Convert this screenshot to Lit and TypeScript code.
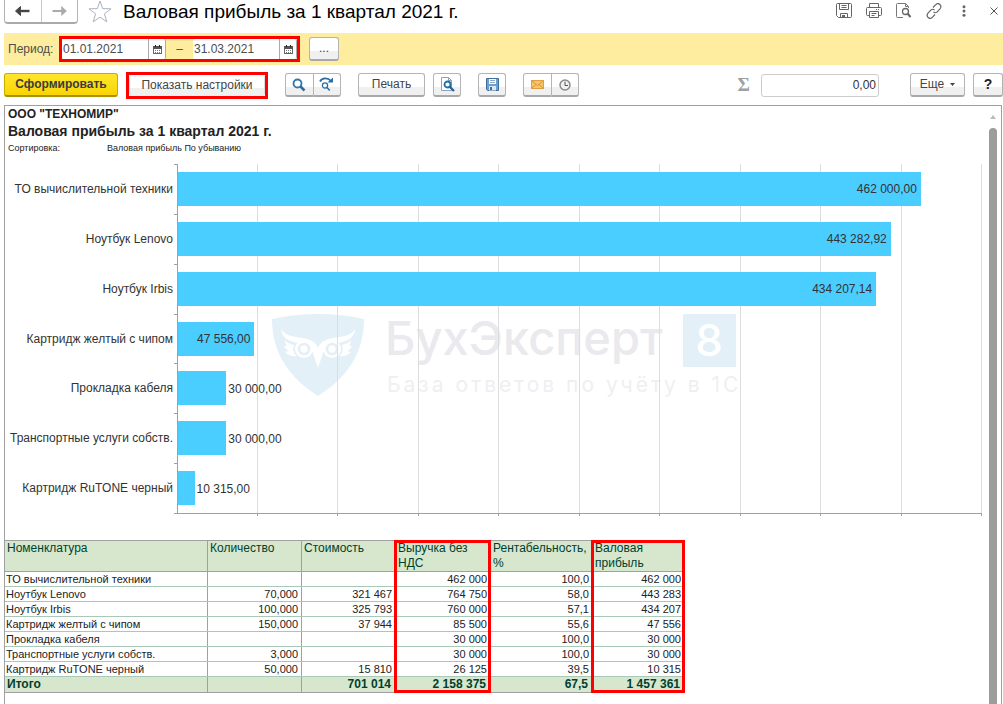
import { LitElement, html, css, svg } from "lit";
import { customElement } from "lit/decorators.js";

const BARS = [
  { name: "ТО вычислительной техники", value: 462000, text: "462 000,00" },
  { name: "Ноутбук Lenovo", value: 443282.92, text: "443 282,92" },
  { name: "Ноутбук Irbis", value: 434207.14, text: "434 207,14" },
  { name: "Картридж желтый с чипом", value: 47556, text: "47 556,00" },
  { name: "Прокладка кабеля", value: 30000, text: "30 000,00" },
  { name: "Транспортные услуги собств.", value: 30000, text: "30 000,00" },
  { name: "Картридж RuTONE черный", value: 10315, text: "10 315,00" },
];
const AXIS_MAX = 500000;
const INSIDE_FROM = 40000;

const COLUMNS = ["Номенклатура", "Количество", "Стоимость", "Выручка без НДС", "Рентабельность, %", "Валовая прибыль"];
const MARKED = [3, 5];
const ROWS = [
  ["ТО вычислительной техники", "", "", "462 000", "100,0", "462 000"],
  ["Ноутбук Lenovo", "70,000", "321 467", "764 750", "58,0", "443 283"],
  ["Ноутбук Irbis", "100,000", "325 793", "760 000", "57,1", "434 207"],
  ["Картридж желтый с чипом", "150,000", "37 944", "85 500", "55,6", "47 556"],
  ["Прокладка кабеля", "", "", "30 000", "100,0", "30 000"],
  ["Транспортные услуги собств.", "3,000", "", "30 000", "100,0", "30 000"],
  ["Картридж RuTONE черный", "50,000", "15 810", "26 125", "39,5", "10 315"],
];
const TOTAL = ["Итого", "", "701 014", "2 158 375", "67,5", "1 457 361"];

const icon = (w: number, h: number, body: unknown) =>
  html`<svg width=${w} height=${h} viewBox="0 0 ${w} ${h}" fill="none" aria-hidden="true">${body}</svg>`;

const calendar = icon(9, 9, svg`
  <rect x="0.5" y="1.5" width="8" height="7" fill="#fff" stroke="#666"/>
  <path d="M0 1h9v3H0z" fill="#555"/><path d="M2 0h1v2H2zM6 0h1v2H6z" fill="#222"/>
  <path d="M2 5.500h5M2 7.500h5" stroke="#777" stroke-dasharray="1 1"/>`);
const back = icon(15, 10, svg`<path d="M14.500 5H3" stroke="#444" stroke-width="2.400"/><path d="M.5 5L5.500.5v3L4.500 5l1 1.500v3z" fill="#444" stroke="#444"/>`);
const forward = icon(15, 10, svg`<path d="M.5 5H12" stroke="#aaa" stroke-width="2"/><path d="M14.500 5L9.500.5v3L10.500 5l-1 1.500v3z" fill="#aaa" stroke="#aaa" stroke-width=".6"/>`);
const star = icon(24, 23, svg`<path d="M12 1l2.700 7.600 8.300.2-6.600 5 2.400 8L12 17.200 5.200 21.800l2.400-8L1 8.800l8.300-.2z" stroke="#a9b2bd" stroke-width="1"/>`);
const search = icon(14, 14, svg`<circle cx="5.500" cy="5.500" r="4" stroke="#2c78ad" stroke-width="1.800"/><path d="M8.500 8.500l4 4" stroke="#2c6da4" stroke-width="2.500"/>`);
const searchNext = icon(15, 15, svg`<path d="M1 4.500C3 .5 9 .5 12 4" stroke="#2c6da4" stroke-width="1.800"/><path d="M14 .500v5H8.500z" fill="#2c6da4"/>
  <circle cx="6" cy="8.500" r="2.600" stroke="#2c6da4" stroke-width="1.300"/><path d="M8 10.500l2.800 3" stroke="#2c6da4" stroke-width="1.600"/>`);
const preview = icon(15, 15, svg`<path d="M1.500.5h7l3 3v10h-10z" fill="#fff" stroke="#8da2b5"/><path d="M8.500.5v3h3" stroke="#8da2b5"/>
  <circle cx="7.500" cy="7.500" r="3" stroke="#1f6fa5" stroke-width="1.800"/><path d="M9.500 9.500l4.500 4.500" stroke="#1f6599" stroke-width="2.200"/>`);
const save = icon(13, 13, svg`<path d="M.5.5h12v12h-11l-1-1z" fill="#6d9fd0" stroke="#3f6e9e"/><path d="M3 1h7v5H3z" fill="#fff"/>
  <path d="M4 2.500h5M4 4.500h5" stroke="#8fa9c0"/><path d="M3 8h7v4.500H3z" fill="#dfe7ee"/><path d="M4 9h2v3H4z" fill="#3f6e9e"/>`);
const mail = icon(13, 9, svg`<path d="M.5.5h12v8H.5z" fill="#f7c46c" stroke="#e0a040"/><path d="M.5.5l6 5 6-5M.5 8.500l4.500-4M12.500 8.500L8 4.500" stroke="#cf8b28" stroke-width=".8"/>`);
const clock = icon(12, 12, svg`<circle cx="6" cy="6" r="5" fill="#f2f2f2" stroke="#8a8a8a" stroke-width="1.500"/><path d="M6 2.500V6.500h3" stroke="#555"/>`);
const diskLine = icon(16, 16, svg`<path d="M.5 1.500q0-1 1-1h13q1 0 1 1v12q0 1-1 1h-12l-2-2z" stroke="#666"/><path d="M3.500.5v6h9v-6M5.500 2.500h5M5.500 4.500h5" stroke="#666"/><path d="M4.500 14.500v-4h7v4" stroke="#666"/><path d="M6 12h3v2H6z" fill="#666"/>`);
const printer = icon(16, 16, svg`<path d="M3.500 4V.5h9V4M3.500 12.500h-2q-1 0-1-1v-6q0-1 1-1h13q1 0 1 1v6q0 1-1 1h-2" stroke="#666"/><path d="M3.500 8.500h9v6h-9zM5.500 10.500h5M5.500 12.500h3M10 6.500h1M12 6.500h1" stroke="#666"/>`);
const pageSearch = icon(16, 16, svg`<path d="M7 14.500H1.500q-1 0-1-1v-12q0-1 1-1h8l3 3V5" stroke="#777"/><path d="M9.500.5v3h3" stroke="#777"/><circle cx="9.500" cy="8.500" r="3" stroke="#666" stroke-width="1.300"/><path d="M11.500 10.500l3 3.500" stroke="#666" stroke-width="2"/>`);
const link = icon(16, 16, svg`<g stroke="#666" stroke-width="1.200"><path d="M7 4.500l2.500-2.700c3-3 7 .8 4.500 4l-2.800 3c-1 1-2.500 1.200-3.800.3"/><path d="M9 11.500l-2.500 2.700c-3 3-7-.8-4.500-4l2.800-3c1-1 2.500-1.200 3.800-.3"/></g>`);
const dots = icon(4, 12, svg`<g fill="#666"><circle cx="2" cy="1.700" r="1.500"/><circle cx="2" cy="6" r="1.500"/><circle cx="2" cy="10.300" r="1.500"/></g>`);
const cross = icon(8, 8, svg`<path d="M.5.5l7 7M7.500.5l-7 7" stroke="#555"/>`);

const watermark = html`<svg class="watermark" width="490" height="120" viewBox="0 -20 490 120" aria-hidden="true">
  <path d="M0 5Q46-5 92 5C92 38 76 63 46 82C16 63 0 38 0 5z" fill="#e3f0f8"/>
  <g fill="#fff">
    <path d="M9 15C14 24 28 22 38 26C43 28 45 31 46 34C47 31 49 28 54 26C64 22 78 24 83 15C82 24 76 27 66 29C58 30 52 33 50 42L46 54L42 42C40 33 34 30 26 29C16 27 10 24 9 15z"/>
    <circle cx="32" cy="35" r="9"/><circle cx="60" cy="35" r="9"/>
    <path d="M13 26q3 4 9 5l-1 5q1 4 4 6q-8 1-12-4l4-1q-4-2-5-5l3 0q-2-3-2-6zM79 26q-3 4-9 5l1 5q-1 4-4 6q8 1 12-4l-4-1q4-2 5-5l-3 0q2-3 2-6z"/>
  </g>
  <g stroke="#e3f0f8" fill="none" stroke-width="2.600"><circle cx="32" cy="35" r="5"/><circle cx="60" cy="35" r="5"/></g>
  <text class="brand" x="113" y="41">БухЭксперт</text>
  <text class="slogan" x="115" y="78">База ответов по учёту в 1С</text>
  <path d="M411 0h53v53h-53z" fill="#e3f0f8"/>
  <text class="eight" x="437" y="42" text-anchor="middle">8</text>
</svg>`;

@customElement("app-root")
export class AppRoot extends LitElement {
  static styles = css`
    :host { display: block; height: 100vh; overflow: hidden; background: #fff; color: #333; font: 12px/15px "Liberation Sans", Arial, sans-serif; }
    * { box-sizing: border-box; }
    svg { display: block; flex: none; }
    button, input { font: inherit; color: inherit; margin: 0; padding: 0; }
    .page { display: flex; flex-direction: column; height: 100%; padding-left: 4px; }
    header { display: flex; height: 33px; flex: none; align-items: flex-start; }
    .nav { display: flex; width: 74px; height: 24px; border: 1px solid #b4b4b4; border-top: 0; border-bottom: 2px solid #aaa; border-radius: 0 0 4px 4px; }
    .plain { border: 0; background: none; display: flex; align-items: center; justify-content: center; }
    .nav .plain { flex: 1; }
    .nav .plain + .plain { border-left: 1px solid #c8c8c8; }
    .star { margin: 0 11px 0 10px; }
    h1 { margin: 0; flex: 1; font-size: 19px; line-height: 24px; font-weight: 400; color: #000; white-space: nowrap; }
    .tools { display: flex; align-items: center; gap: 14px; height: 22px; padding-right: 5px; }
    .tools .dots { margin-left: 6px; }
    .tools .cross { margin-left: 10px; }
    .period { display: flex; flex: none; align-items: center; height: 32px; background: #ffed9f; padding-left: 4px; color: #4d4d4d; }
    .period label.title { width: 51px; white-space: nowrap; }
    .mark { border: 3px solid #f00; display: flex; align-items: center; }
    .dates { height: 26px; }
    .date { display: flex; height: 20px; width: 104px; background: #fff; border-right: 1px solid #aaa; border-radius: 2px; }
    .date input { flex: 1; min-width: 0; border: 0; background: none; outline: 0; padding-left: 1px; }
    .date .plain { width: 17px; border-left: 1px solid #aaa; }
    .dash { width: 27px; text-align: center; }
    .btn { display: flex; align-items: center; justify-content: center; height: 24px; border: 1px solid #b4b4b4; border-bottom: 2px solid #a8a8a8; border-radius: 3px; background: linear-gradient(#fff 60%, #f0f0f0 61%); color: #444; white-space: nowrap; }
    .more { width: 30px; margin-left: 9px; }
    .bar { display: flex; flex: none; align-items: center; height: 40px; }
    .primary { width: 114px; font-weight: 700; background: linear-gradient(#ffe52e, #f9d500); border-color: #c9ac00; border-bottom-color: #a89000; color: #3b3b3b; }
    .settings { margin-left: 8px; height: 27px; width: 142px; }
    .settings .btn { height: 21px; flex: 1; border-color: #ddd; border-width: 0 1px; }
    .pair { display: flex; width: 56px; margin-left: 17px; }
    .pair .btn { flex: 1; }
    .pair .btn:first-child { border-radius: 3px 0 0 3px; }
    .pair .btn:last-child { border-radius: 0 3px 3px 0; border-left: 0; }
    .print { width: 67px; margin-left: 17px; }
    .single { width: 28px; }
    .near { margin-left: 8px; }
    .far { margin-left: 17px; }
    .sum { display: flex; align-items: center; margin-left: auto; gap: 11px; }
    .sigma { font: 700 19px/24px "Liberation Serif", serif; color: #a0a0a0; }
    .sum input { width: 118px; height: 23px; border: 1px solid #ccc; border-radius: 3px; text-align: right; padding-right: 2px; background: #fff; }
    .menu { width: 55px; margin-left: 31px; gap: 6px; }
    .help { width: 30px; margin-left: 8px; font-weight: 700; font-size: 14px; color: #222; }
    .report { display: flex; flex: 1; min-height: 0; border: 1px solid #a0a0a0; border-bottom: 0; margin-right: 1px; overflow: hidden; }
    .sheet { flex: 1; min-width: 0; overflow: hidden; }
    .rail { width: 12px; display: flex; flex-direction: column; align-items: center; padding-right: 4px; }
    .rail .arrow { margin: 9px 0 9px; }
    .thumb { width: 8px; flex: 1; background: #9c9c9c; border-radius: 4px 4px 0 0; }
    .org { margin: 0; padding: 1px 3px 0; line-height: 15px; font-weight: 700; color: #222; }
    h2 { margin: 0; padding: 0 3px; font-size: 14px; line-height: 19px; font-weight: 700; color: #222; }
    .sort { display: flex; padding-left: 3px; font-size: 9px; line-height: 15px; color: #222; }
    .sort dt { width: 99px; }
    .sort dd, .sort { margin: 0; }
    .chart { position: relative; display: flex; margin-top: 8px; height: 350px; padding-right: 7px; }
    .names { width: 172px; display: flex; flex-direction: column; padding-bottom: 1px; }
    .names div { flex: 1; display: flex; align-items: center; justify-content: flex-end; padding: 1px 4px 0 0; white-space: nowrap; position: relative; }
    .names div::after, .names div:last-child::before { content: ""; position: absolute; right: 0; top: 0; width: 3px; height: 1px; background: #a0a0a0; }
    .names div:last-child::before { top: 100%; }
    .plot { position: relative; flex: 1; display: flex; flex-direction: column; border-left: 1px solid #a0a0a0; border-bottom: 1px solid #a0a0a0; }
    .grid { position: absolute; inset: 0 0 -3px -1px; display: flex; }
    .grid i { flex: 1; border-right: 1px solid #ddd; position: relative; }
    .grid i::after { content: ""; position: absolute; right: -1px; bottom: 0; width: 1px; height: 3px; background: #a0a0a0; }
    .row { position: relative; flex: 1; display: flex; align-items: center; }
    .fill { height: 34px; background: #4acdff; display: flex; align-items: center; justify-content: flex-end; padding: 2px 4px 0 0; white-space: nowrap; }
    .fill.short { padding: 0; }
    .value { padding: 2px 0 0 2px; }
    .watermark { position: absolute; left: 267px; top: 130px; overflow: visible; }
    .brand { font: 500 47px Inter, "Open Sans", sans-serif; fill: #e9e9ee; }
    .slogan { font: 400 21px Inter, "Open Sans", sans-serif; fill: #efeff3; letter-spacing: 3px; }
    .eight { font: 500 44px Inter, "Open Sans", sans-serif; fill: #fff; }
    table { border-collapse: collapse; table-layout: fixed; width: 680px; margin-top: 26px; font-size: 11px; line-height: 14px; margin-left: -1px; }
    .c0 { width: 203px; } .c1, .c2 { width: 94px; } .c3 { width: 95px; } .c4 { width: 102px; } .c5 { width: 92px; }
    th, td { position: relative; padding: 0 3px 0 2px; border: 1px solid #a9c8b8; text-align: right; font-weight: 400; white-space: nowrap; color: #222; border-left-color: #a0a0a0; border-right-color: #a0a0a0; }
    tbody th { text-align: left; padding-left: 1px; }
    thead th { height: 31px; padding: 0 0 0 2px; font-size: 12px; line-height: 15px; text-align: left; vertical-align: top; white-space: normal; background: #d6e7ce; color: #003f2f; border-color: #a0a0a0; }
    tfoot th, tfoot td { height: 16px; font-size: 12px; line-height: 15px; font-weight: 700; background: #d6e7ce; color: #003f2f; border-color: #a0a0a0; padding-right: 4px; }
    tfoot th { text-align: left; }
    .hot::after { content: ""; position: absolute; z-index: 1; inset: -1px -1px -1px -2px; border: 0 solid #f00; border-width: 0 3px; pointer-events: none; }
    thead .hot::after { border-top-width: 3px; }
    tfoot .hot::after { border-bottom-width: 3px; }
  `;

  private cell(text: string, i: number) {
    return html`<td class=${MARKED.includes(i) ? "hot" : ""}>${text}</td>`;
  }

  render() {
    return html`<div class="page">
      <header>
        <div class="nav"><button class="plain" aria-label="Назад">${back}</button><button class="plain" aria-label="Вперед">${forward}</button></div>
        <button class="plain star" aria-label="В избранное">${star}</button>
        <h1>Валовая прибыль за 1 квартал 2021 г.</h1>
        <div class="tools">
          <button class="plain" aria-label="Сохранить">${diskLine}</button>
          <button class="plain" aria-label="Печать">${printer}</button>
          <button class="plain" aria-label="Просмотр">${pageSearch}</button>
          <button class="plain" aria-label="Ссылка">${link}</button>
          <button class="plain dots" aria-label="Меню">${dots}</button>
          <button class="plain cross" aria-label="Закрыть">${cross}</button>
        </div>
      </header>
      <div class="period">
        <label class="title" for="from">Период:</label>
        <div class="mark dates">
          <div class="date"><input id="from" value="01.01.2021"><button class="plain" aria-label="Дата начала">${calendar}</button></div>
          <label class="dash" for="to">–</label>
          <div class="date"><input id="to" value="31.03.2021"><button class="plain" aria-label="Дата окончания">${calendar}</button></div>
        </div>
        <button class="btn more">...</button>
      </div>
      <div class="bar">
        <button class="btn primary">Сформировать</button>
        <div class="mark settings"><button class="btn">Показать настройки</button></div>
        <div class="pair"><button class="btn" aria-label="Найти">${search}</button><button class="btn" aria-label="Найти далее">${searchNext}</button></div>
        <button class="btn print">Печать</button>
        <button class="btn single near" aria-label="Предварительный просмотр">${preview}</button>
        <button class="btn single far" aria-label="Сохранить">${save}</button>
        <div class="pair"><button class="btn" aria-label="Отправить">${mail}</button><button class="btn" aria-label="Расписание">${clock}</button></div>
        <div class="sum"><label class="sigma" for="sum">Σ</label><input id="sum" value="0,00"></div>
        <button class="btn menu">Еще ${icon(5, 3, svg`<path d="M0 0h5L2.500 3z" fill="#444"/>`)}</button>
        <button class="btn help">?</button>
      </div>
      <main class="report">
        <div class="sheet">
          <p class="org">ООО "ТЕХНОМИР"</p>
          <h2>Валовая прибыль за 1 квартал 2021 г.</h2>
          <dl class="sort"><dt>Сортировка:</dt><dd>Валовая прибыль По убыванию</dd></dl>
          <div class="chart">
            ${watermark}
            <div class="names">${BARS.map((b) => html`<div>${b.name}</div>`)}</div>
            <div class="plot">
              <div class="grid">${Array.from({ length: 10 }, () => html`<i></i>`)}</div>
              ${BARS.map((b) => {
                const inside = b.value > INSIDE_FROM;
                return html`<div class="row"><div class="fill ${inside ? "" : "short"}" style="width:${(b.value / AXIS_MAX) * 100}%">${inside ? b.text : ""}</div>${inside ? "" : html`<span class="value">${b.text}</span>`}</div>`;
              })}
            </div>
          </div>
          <table>
            <colgroup>${COLUMNS.map((_, i) => html`<col class="c${i}">`)}</colgroup>
            <thead><tr>${COLUMNS.map((c, i) => html`<th scope="col" class=${MARKED.includes(i) ? "hot" : ""}>${c}</th>`)}</tr></thead>
            <tbody>${ROWS.map((r) => html`<tr><th scope="row">${r[0]}</th>${r.slice(1).map((t, i) => this.cell(t, i + 1))}</tr>`)}</tbody>
            <tfoot><tr><th scope="row">${TOTAL[0]}</th>${TOTAL.slice(1).map((t, i) => this.cell(t, i + 1))}</tr></tfoot>
          </table>
        </div>
        <div class="rail"><span class="arrow">${icon(6, 4, svg`<path d="M0 4h6L3 0z" fill="#bbb"/>`)}</span><div class="thumb"></div></div>
      </main>
    </div>`;
  }
}
